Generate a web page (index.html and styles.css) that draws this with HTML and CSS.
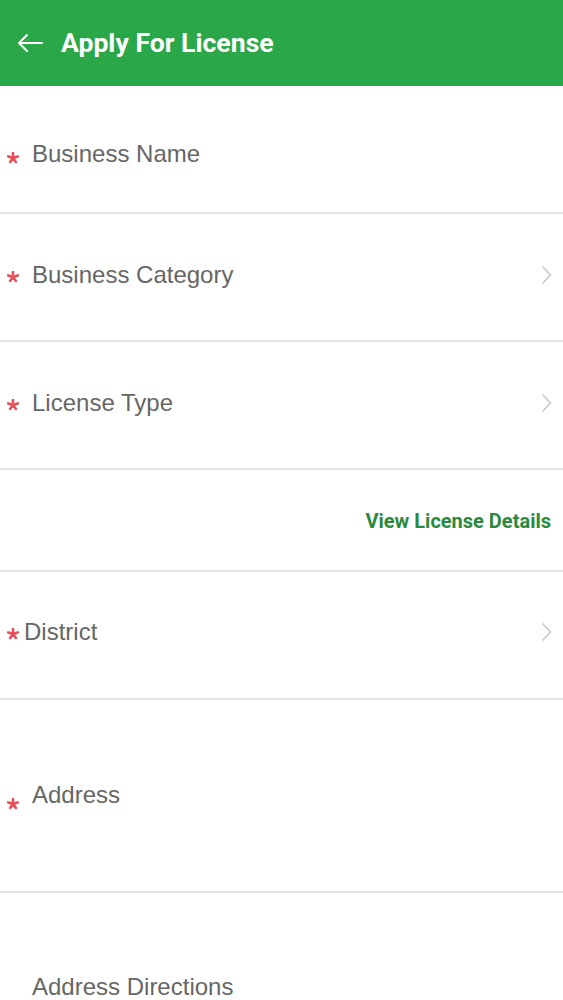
FILE: index.html
```html
<!DOCTYPE html>
<html lang="en">
<head>
<meta charset="utf-8">
<title>Apply For License</title>
<link rel="stylesheet" href="styles.css">
</head>
<body>
<header class="appbar">
  <svg class="back" width="26" height="20" viewBox="0 0 26 20"><path d="M25 10H2M10 2L2 10L10 18" fill="none" stroke="#fff" stroke-width="2" stroke-linecap="round" stroke-linejoin="round"/></svg>
  <h1 class="title">Apply For License</h1>
</header>
<main class="form">
  <div class="row row-first">
    <svg class="req" width="12" height="12" viewBox="0 0 12 12"><path d="M6 6L6 1M6 6L10.8 4.4M6 6L8.9 10M6 6L3.1 10M6 6L1.2 4.4" stroke="#e5505a" stroke-width="2.6" stroke-linecap="round"/></svg>
    <span class="label">Business Name</span>
  </div>
  <div class="row">
    <svg class="req" width="12" height="12" viewBox="0 0 12 12"><path d="M6 6L6 1M6 6L10.8 4.4M6 6L8.9 10M6 6L3.1 10M6 6L1.2 4.4" stroke="#e5505a" stroke-width="2.6" stroke-linecap="round"/></svg>
    <span class="label">Business Category</span>
    <svg class="chev" width="11" height="20" viewBox="0 0 11 20"><path d="M1.5 1.5L9.5 10L1.5 18.5" fill="none" stroke="#c6c6c6" stroke-width="1.5"/></svg>
  </div>
  <div class="row">
    <svg class="req" width="12" height="12" viewBox="0 0 12 12"><path d="M6 6L6 1M6 6L10.8 4.4M6 6L8.9 10M6 6L3.1 10M6 6L1.2 4.4" stroke="#e5505a" stroke-width="2.6" stroke-linecap="round"/></svg>
    <span class="label">License Type</span>
    <svg class="chev" width="11" height="20" viewBox="0 0 11 20"><path d="M1.5 1.5L9.5 10L1.5 18.5" fill="none" stroke="#c6c6c6" stroke-width="1.5"/></svg>
  </div>
  <div class="row row-link">
    <a class="link" href="#">View License Details</a>
  </div>
  <div class="row row-district">
    <svg class="req req-tight" width="12" height="12" viewBox="0 0 12 12"><path d="M6 6L6 1M6 6L10.8 4.4M6 6L8.9 10M6 6L3.1 10M6 6L1.2 4.4" stroke="#e5505a" stroke-width="2.6" stroke-linecap="round"/></svg>
    <span class="label">District</span>
    <svg class="chev" width="11" height="20" viewBox="0 0 11 20"><path d="M1.5 1.5L9.5 10L1.5 18.5" fill="none" stroke="#c6c6c6" stroke-width="1.5"/></svg>
  </div>
  <div class="row row-tall">
    <svg class="req req-low" width="12" height="12" viewBox="0 0 12 12"><path d="M6 6L6 1M6 6L10.8 4.4M6 6L8.9 10M6 6L3.1 10M6 6L1.2 4.4" stroke="#e5505a" stroke-width="2.6" stroke-linecap="round"/></svg>
    <span class="label">Address</span>
  </div>
  <div class="row row-tall row-last">
    <span class="req-space"></span>
    <span class="label">Address Directions</span>
  </div>
</main>
</body>
</html>
```

FILE: styles.css
```css
* { box-sizing: border-box; }
html, body { margin: 0; padding: 0; background: #fff; }
body { font-family: "Liberation Sans", Arial, sans-serif; }

.appbar {
  height: 86px;
  background: #2aa748;
  display: flex;
  align-items: center;
  padding-left: 17px;
  gap: 18px;
}
.back { display: block; flex: none; }
.title {
  margin: 0;
  font-family: Roboto, "Liberation Sans", sans-serif;
  font-weight: 700;
  font-size: 26.6px;
  color: #fff;
  line-height: 1;
}

.form { display: flex; flex-direction: column; }

.row {
  height: 128px;
  border-bottom: 2px solid #e3e3e3;
  display: flex;
  align-items: center;
  padding-left: 7px;
  padding-right: 11px;
  padding-bottom: 4px;
}
.row-first { padding-top: 10px; padding-bottom: 0; }
.row-link { height: 102px; justify-content: flex-end; padding-right: 12px; padding-top: 2px; padding-bottom: 0; }
.row-district { padding-bottom: 6px; }
.row-tall { height: 193px; padding-bottom: 2px; }
.row-last { border-bottom: none; padding-bottom: 6px; }

.req { flex: none; display: block; margin-right: 13px; margin-top: 4px; }
.row-first .req { margin-top: 8px; }
.req-tight { margin-right: 5px; }
.req-low { margin-top: 18px; }
.req-space { flex: none; width: 12px; margin-right: 13px; }

.label {
  font-size: 24px;
  line-height: 28px;
  color: #666666;
  flex: 1;
}
.chev { flex: none; display: block; }

.link {
  font-family: Roboto, "Liberation Sans", sans-serif;
  font-weight: 700;
  font-size: 20px;
  color: #2b8a3e;
  text-decoration: none;
}
```
